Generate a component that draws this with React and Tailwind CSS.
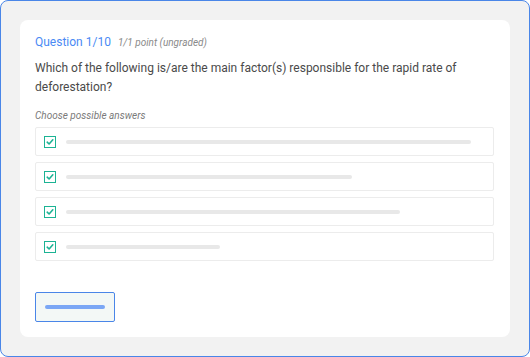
import React from 'react';

const options = [405, 286, 334, 154];

const CheckBox = () => (
    <div className="w-3 h-3 shrink-0 border-[1.5px] border-[#1cb394] flex items-center justify-center">
        <svg width="8" height="8" viewBox="0 0 8 8" fill="none">
            <path d="M1.2 4.2 L3.1 6 L6.8 1.8" stroke="#1cb394" strokeWidth="1.6" strokeLinecap="round" strokeLinejoin="round" />
        </svg>
    </div>
);

export default function App() {
    return (
        <div className="w-[530px] h-[357px] bg-[#f2f2f2] border border-[#4a86e8] rounded-lg p-[19px] font-['Roboto',sans-serif]">
            <div className="h-full bg-white rounded-lg pt-[14px] pl-[15px] pr-[16px]">
                {/* header */}
                <div className="flex items-baseline gap-[7px] leading-4">
                    <span className="text-[12px] text-[#4a8af4]">Question 1/10</span>
                    <span className="text-[10px] italic text-[#8a8a8a]">1/1 point (ungraded)</span>
                </div>
                <p className="mt-2 text-[12px] leading-[19px] text-[#4a4a4a]">
                    Which of the following is/are the main factor(s) responsible for the rapid rate of deforestation?
                </p>
                <p className="mt-[12px] text-[10px] leading-[14px] italic text-[#7a7a7a]">Choose possible answers</p>

                <div className="mt-1 flex flex-col gap-[6px]">
                    {options.map((w, i) => (
                        <div key={i} className="h-[29px] border border-[#ececec] rounded-[2px] flex items-center pl-2 gap-[10px]">
                            <CheckBox />
                            <div className="h-1 rounded-full bg-[#e8e8e8]" style={{ width: w }} />
                        </div>
                    ))}
                </div>

                {/* submit button */}
                <div className="mt-[31px] w-[80px] h-[30px] border border-[#4a86e8] rounded-[2px] bg-[#f3f8f6] flex items-center justify-center">
                    <div className="w-[60px] h-1 rounded-full bg-[#7ba7f5]" />
                </div>
            </div>
        </div>
    );
}
